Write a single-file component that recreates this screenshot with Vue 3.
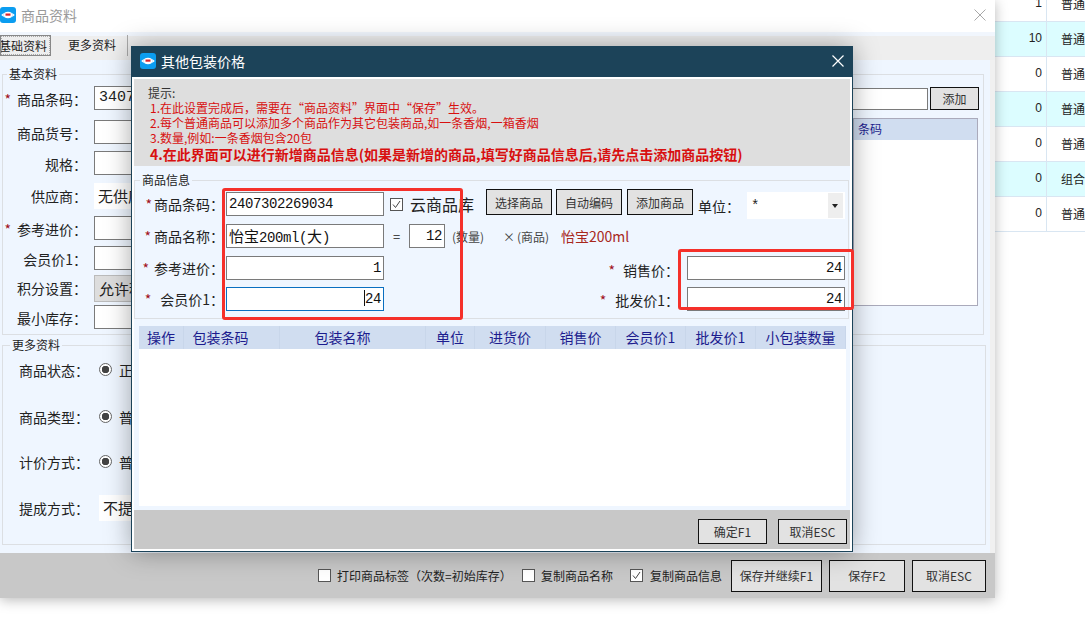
<script setup>
const tableRows = [
  { qty: '1', kind: '普通', tint: false },
  { qty: '10', kind: '普通', tint: true },
  { qty: '0', kind: '普通', tint: false },
  { qty: '0', kind: '普通', tint: true },
  { qty: '0', kind: '普通', tint: false },
  { qty: '0', kind: '组合', tint: true },
  { qty: '0', kind: '普通', tint: false },
]
const baseRows = [
  { label: '商品条码', star: true, value: '34072', kind: 'input' },
  { label: '商品货号', kind: 'input' },
  { label: '规格', kind: 'input' },
  { label: '供应商', value: '无供应商', kind: 'plain' },
  { label: '参考进价', star: true, kind: 'input' },
  { label: '会员价1', kind: 'input' },
  { label: '积分设置', value: '允许积分', kind: 'gray' },
  { label: '最小库存', kind: 'input' },
]
const moreRows = [
  { label: '商品状态', value: '正常', top: 12 },
  { label: '商品类型', value: '普通商品', top: 23 },
  { label: '计价方式', value: '普通', top: 21 },
]
const heads = [
  { t: '操作', w: 45, pad: 0 }, { t: '包装条码', w: 96, pad: 22 }, { t: '包装名称', w: 146, pad: 20 },
  { t: '单位', w: 49, pad: 0 }, { t: '进货价', w: 71, pad: 0 }, { t: '销售价', w: 70, pad: 0 },
  { t: '会员价1', w: 70, pad: 0 }, { t: '批发价1', w: 70, pad: 0 }, { t: '小包装数量', w: 90, pad: 0 },
]
</script>

<template>
  <div class="desk">
    <div class="bg-table">
      <div v-for="(r, i) in tableRows" :key="i" class="bg-row" :class="{ tint: r.tint }">
        <span class="bg-qty">{{ r.qty }}</span>
        <span class="bg-kind">{{ r.kind }}</span>
      </div>
    </div>

    <section class="win back">
      <header class="back-title">
        <svg class="logo" viewBox="0 0 16 16"><rect width="16" height="16" rx="3" fill="#0b9df0"/><ellipse cx="8" cy="8" rx="4.200" ry="3.200" fill="#fff"/><path d="M1.200 8 3.800 6v4zM14.800 8 12.200 6v4z" fill="#fff"/><rect x="5.500" y="6.500" width="5" height="2.200" fill="#d9232e"/></svg>
        <span class="back-name">商品资料</span>
        <svg class="x back-x" viewBox="0 0 12 12"><path d="M.5.500l11 11M11.500.500l-11 11" stroke="#a8a8a8" fill="none"/></svg>
      </header>
      <nav class="tabs">
        <span class="tab on">基础资料</span>
        <span class="tab">更多资料</span>
      </nav>
      <div class="back-body">
        <div class="fs base">
          <span class="legend lb">基本资料</span>
          <div class="base-grid">
            <div v-for="r in baseRows" :key="r.label" class="base-row">
              <label class="lab"><i v-if="r.star">*</i>{{ r.label }}：</label>
              <div class="box" :class="r.kind">{{ r.value }}</div>
            </div>
          </div>
          <div class="side">
            <div class="side-top">
              <div class="side-input"></div>
              <button class="btn side-btn">添加</button>
            </div>
            <div class="side-list"><div class="side-head">条码</div></div>
          </div>
        </div>
        <div class="fs more">
          <span class="legend">更多资料</span>
          <div v-for="r in moreRows" :key="r.label" class="more-row" :style="{ marginTop: r.top + 'px' }">
            <label class="lab">{{ r.label }}：</label>
            <span class="radio"></span><span class="radio-text">{{ r.value }}</span>
          </div>
          <div class="more-row last">
            <label class="lab">提成方式：</label>
            <div class="box plain comm">不提成</div>
          </div>
        </div>
      </div>
      <footer class="back-foot">
        <label class="chk-line"><span class="chk"></span>打印商品标签（次数=初始库存）</label>
        <label class="chk-line c2"><span class="chk"></span>复制商品名称</label>
        <label class="chk-line c3">
          <span class="chk"><svg viewBox="0 0 13 13"><path d="M3 6.500l2.500 3L10 3" stroke="#444" fill="none"/></svg></span>复制商品信息
        </label>
        <button class="btn fb b1">保存并继续F1</button>
        <button class="btn fb b2">保存F2</button>
        <button class="btn fb b3">取消ESC</button>
      </footer>
    </section>

    <section class="win dialog">
      <header class="dlg-title">
        <svg class="logo" viewBox="0 0 16 16"><rect width="16" height="16" rx="3" fill="#0b9df0"/><ellipse cx="8" cy="8" rx="4.200" ry="3.200" fill="#fff"/><path d="M1.200 8 3.800 6v4zM14.800 8 12.200 6v4z" fill="#fff"/><rect x="5.500" y="6.500" width="5" height="2.200" fill="#d9232e"/></svg>
        <span>其他包装价格</span>
        <svg class="x dlg-x" viewBox="0 0 12 12"><path d="M.5.500l11 11M11.500.500l-11 11" stroke="#fff" fill="none" stroke-width="1.200"/></svg>
      </header>
      <div class="dlg-inner">
        <div class="hint">
          <p class="h0">提示:</p>
          <p>1.在此设置完成后，需要在“商品资料”界面中“保存”生效。</p>
          <p>2.每个普通商品可以添加多个商品作为其它包装商品,如一条香烟,一箱香烟</p>
          <p>3.数量,例如:一条香烟包含20包</p>
          <p class="h4">4.在此界面可以进行新增商品信息(如果是新增的商品,填写好商品信息后,请先点击添加商品按钮)</p>
        </div>
        <div class="fs info">
          <span class="legend li">商品信息</span>
          <div class="info-row r1">
            <label class="lab il s1"><i>*</i>商品条码：</label>
            <div class="field w158">2407302269034</div>
            <span class="chk big"><svg viewBox="0 0 13 13"><path d="M3 6.500l2.500 3L10 3" stroke="#444" fill="none"/></svg></span>
            <span class="cloud">云商品库</span>
            <button class="btn pick">选择商品</button>
            <button class="btn pick p2">自动编码</button>
            <button class="btn pick p3">添加商品</button>
            <label class="lab unit">单位：</label>
            <div class="select"><span>*</span><b></b></div>
          </div>
          <div class="info-row r2">
            <label class="lab il s2"><i>*</i>商品名称：</label>
            <div class="field w158"><span class="cn">怡宝</span>200ml(<span class="cn">大</span>)</div>
            <span class="eq">=</span>
            <div class="field qty right">12</div>
            <span class="note n1">(数量)</span>
            <span class="note n2">×</span>
            <span class="note n3">(商品)</span>
            <span class="prod">怡宝200ml</span>
          </div>
          <div class="info-row r3">
            <label class="lab il s3"><i>*</i>参考进价：</label>
            <div class="field w158 right">1</div>
            <label class="lab rl l1"><i>*</i>销售价：</label>
            <div class="field w158 right">24</div>
          </div>
          <div class="info-row r4">
            <label class="lab il s4"><i>*</i>会员价1：</label>
            <div class="field w158 right focus"><span class="caret"></span>24</div>
            <label class="lab rl l2"><i>*</i>批发价1：</label>
            <div class="field w158 right">24</div>
          </div>
        </div>
        <div class="grid-wrap">
          <div class="grid-head">
            <span v-for="h in heads" :key="h.t" :style="{ width: h.w + 'px', paddingRight: h.pad + 'px' }">{{ h.t }}</span>
          </div>
        </div>
        <footer class="dlg-foot">
          <button class="btn ok">确定F1</button>
          <button class="btn ok">取消ESC</button>
        </footer>
      </div>
    </section>

    <div class="mark m1"></div>
    <div class="mark m2"></div>
  </div>
</template>

<style>
html, body { margin: 0; background: #fff; overflow: hidden; }
</style>

<style scoped>
.desk {
  position: relative; width: 1085px; height: 632px; overflow: hidden; background: #fff;
  font-family: "Noto Sans CJK SC", "Liberation Sans", sans-serif; color: #222; font-size: 13px;
}
p { margin: 0; }
i { font-style: normal; color: #a01020; }
button { font-family: inherit; padding: 0; }
.bg-table { margin: -13px 0 0 995px; width: 90px; }
.bg-row { display: flex; height: 34px; line-height: 33px; border-bottom: 1px solid #d9e6f2; font-size: 12px; color: #222; }
.bg-row.tint { background: #dcfdff; }
.bg-qty { width: 47px; box-sizing: border-box; text-align: right; font-family: "Liberation Sans", sans-serif; }
.bg-kind { padding-left: 14px; border-left: 1px solid #d9e6f2; margin-left: 4px; white-space: nowrap; overflow: hidden; }
.win { position: absolute; box-sizing: border-box; }
.back {
  left: 0; top: 0; width: 995px; height: 598px; background: #fff; display: flex; flex-direction: column;
  box-shadow: 0 2px 12px rgba(0,0,0,.28);
}
.back-title { height: 32px; display: flex; align-items: center; gap: 5px; color: #9a9a9a; font-size: 14px; position: relative; flex: none; box-sizing: border-box; padding-bottom: 2px; }
.back-name { margin-top: -1px; }
.logo { width: 16px; height: 16px; flex: none; }
.x { position: absolute; width: 12px; height: 12px; }
.back-x { left: 974px; top: 9px; }
.tabs { height: 28px; background: linear-gradient(#f1f6fd 0 4px, #eeeeee 4px); display: flex; align-items: flex-start; flex: none; box-sizing: border-box; padding-top: 3px; }
.tab { height: 21px; line-height: 20px; font-size: 12px; padding: 0 11px; border-right: 1px solid #aaa; color: #222; }
.tab.on { padding: 0; width: 51px; text-indent: -2px; border: 1px solid #888; box-sizing: border-box; background: #eee; overflow: hidden; margin-right: 6px; outline: 1px dotted #aaa; outline-offset: -2px; }
.back-body { flex: 1; background: #eff6ff; padding: 14px 0 4px 2px; min-height: 0; border-right: 5px solid #f0f0f0; }
.fs { position: relative; border: 1px solid #dcdfe3; box-sizing: border-box; }
.legend { position: absolute; left: 7px; top: -9px; background: #eff6ff; padding: 0 2px; font-size: 12px; line-height: 16px; color: #222; }
.lb { left: 4px; }
.base { height: 261px; width: 982px; display: flex; }
.base-grid { display: grid; grid-template-rows: 34px 31px 32px 33px 30px 29px 30px 23px; padding-top: 11px; width: 400px; }
.base-row { display: flex; align-items: flex-start; }
.lab { display: inline-block; font-size: 14px; line-height: 26px; color: #222; white-space: nowrap; }
.base-row .lab { width: 84px; text-align: right; margin-right: 7px; }
.base-row .lab i { margin-right: 6px; }
.box { box-sizing: border-box; width: 150px; height: 24px; font-size: 15px; line-height: 22px; padding-left: 4px; background: #fff; }
.box.input { border: 1px solid #7a7a7a; font-family: "Liberation Mono", monospace; font-size: 15px; }
.box.plain { height: 26px; line-height: 26px; }
.box.gray { height: 27px; line-height: 26px; background: #ddd; border: 1px solid #bbb; }
.side { margin-left: auto; padding: 13px 4px 0 0; width: 260px; box-sizing: border-box; }
.side-top { display: flex; justify-content: flex-end; gap: 2px; }
.side-input { width: 150px; height: 22px; border: 1px solid #7a7a7a; background: #fff; box-sizing: border-box; }
.side-btn { width: 49px; height: 23px; font-size: 12px; margin-top: -1px; }
.side-list { margin: 8px 1px 0 auto; height: 188px; border: 1px solid #aab; background: #fff; box-sizing: border-box; width: 125px; }
.side-head { height: 21px; line-height: 19px; background: #d0ddf0; color: #1c1c8e; font-size: 12px; padding-left: 4px; }
.more { margin-top: 10px; height: 200px; width: 984px; }
.more-row { display: flex; align-items: center; padding-left: 16px; height: 24px; }
.more-row .lab { width: 80px; }
.radio { width: 13px; height: 13px; border-radius: 50%; border: 1px solid #666; box-sizing: border-box; background: radial-gradient(#444 0 3.500px, #fff 4px); margin-top: -2px; }
.radio-text { margin-left: 7px; font-size: 14px; }
.more-row.last { margin-top: 20px; height: 27px; }
.comm { width: 120px; }
.back-foot { flex: none; height: 45px; background: #c8c8c8; box-sizing: border-box; display: flex; align-items: center; padding-left: 318px; }
.chk-line { display: flex; align-items: center; gap: 6px; white-space: nowrap; font-size: 12px; width: 204px; flex: none; }
.chk-line.c2 { width: 108px; }
.chk-line.c3 { width: 101px; gap: 7px; }
.chk { width: 13px; height: 13px; border: 1px solid #555; background: #fff; box-sizing: border-box; display: inline-block; flex: none; }
.chk svg { display: block; margin: -1px; width: 13px; height: 13px; }
.btn { background: #e2e2e2; border: 1px solid #111; color: #333; box-sizing: border-box; font-size: 12px; }
.fb { height: 32px; margin-left: 7px; flex: none; }
.b1 { width: 91px; margin-left: 0; }
.b2 { width: 76px; }
.b3 { width: 74px; }

.dialog { left: 131px; top: 46px; width: 722px; height: 506px; background: #1c4359; padding: 0 1px 1px 1px; box-shadow: 0 0 24px rgba(0,0,0,.35); display: flex; flex-direction: column; }
.dlg-title { height: 31px; color: #fff; font-size: 14px; display: flex; align-items: center; position: relative; padding: 0 0 1px 8px; gap: 5px; flex: none; box-sizing: border-box; }
.dlg-x { left: 700px; top: 9px; }
.dlg-inner { flex: 1; background: #eff6ff; border: 2px solid #fff; display: flex; flex-direction: column; min-height: 0; }
.hint { height: 87px; background: #dedede; color: #d81010; font-size: 12px; line-height: 15px; padding: 6px 0 0 13px; box-sizing: border-box; flex: none; white-space: nowrap; }
.hint p { padding-left: 3px; }
.hint .h0 { color: #333; padding-left: 0; margin-left: 1px; }
.hint .h4 { font-size: 14px; font-weight: 700; color: #d81010; line-height: 18px; }
.info { margin: 14px 0 0 0; height: 139px; width: 715px; flex: none; }
.li { left: 5px; }
.info-row { display: flex; align-items: center; position: relative; height: 24px; }
.r1 { margin-top: 11px; }
.r2 { margin-top: 8px; }
.r3 { margin-top: 8px; }
.r4 { margin-top: 7px; }
.il { width: 91px; text-align: right; box-sizing: border-box; padding-right: 2px; }
.s1 i { margin-right: 2px; }
.s2 i { margin-right: 3px; }
.s3 i { margin-right: 5px; }
.s4 i { margin-right: 9px; }
.field { box-sizing: border-box; height: 24px; border: 1px solid #7a7a7a; background: #fff; font-family: "Liberation Mono", "Noto Sans CJK SC", monospace; font-size: 14px; letter-spacing: -.4px; line-height: 22px; padding: 0 2px; color: #111; white-space: nowrap; }
.cn { font-family: "Noto Sans CJK SC", sans-serif; font-size: 15px; letter-spacing: 0; }
.w158 { width: 158px; flex: none; }
.right { text-align: right; }
.focus { border-color: #0a6fc0; position: relative; }
.caret { display: inline-block; width: 1px; height: 16px; background: #111; vertical-align: -3px; }
.big { margin-left: 6px; }
.cloud { font-size: 16px; margin-left: 7px; width: 76px; white-space: nowrap; line-height: 24px; flex: none; }
.pick { height: 26px; width: 66px; margin-top: -4px; flex: none; }
.p2 { margin-left: 4px; }
.p3 { margin-left: 5px; }
.unit { margin: 4px 0 0 5px; width: 49px; flex: none; }
.select { width: 98px; height: 27px; background: #fff; margin-top: 3px; display: flex; justify-content: space-between; font-family: "Liberation Mono", monospace; font-size: 14px; line-height: 26px; padding: 1px 2px 1px 4px; box-sizing: border-box; flex: none; }
.select b { width: 15px; background: #eee; position: relative; }
.select b::after { content: ""; position: absolute; left: 4px; top: 11px; border: 3px solid transparent; border-top: 4px solid #222; }
.eq { margin-left: 9px; width: 16px; font-size: 13px; }
.qty { width: 36px; flex: none; }
.note { font-size: 12px; color: #444; white-space: nowrap; flex: none; }
.n1 { margin-left: 7px; width: 51px; }
.n2 { width: 14px; }
.n3 { width: 44px; }
.prod { font-size: 14px; color: #a8281c; }
.rl { text-align: right; white-space: nowrap; box-sizing: border-box; padding-right: 8px; flex: none; }
.l1 { width: 303px; margin-top: 4px; }
.l2 { width: 303px; margin-top: 2px; }
.l1 i { margin-right: 8px; }
.l2 i { margin-right: 9px; }
.grid-wrap { flex: 1; margin: 7px 4px 4px 5px; background: #fff; min-height: 0; }
.grid-head { height: 23px; background: #d0ddf0; display: flex; color: #1c1c8e; font-size: 14px; line-height: 23px; }
.grid-head span { text-align: center; white-space: nowrap; box-sizing: border-box; border-right: 1px solid #c8d6ea; flex: none; }
.dlg-foot { height: 39px; flex: none; background: #c8c8c8; display: flex; justify-content: flex-end; gap: 11px; padding: 9px 3px 0 0; box-sizing: border-box; }
.ok { width: 69px; height: 25px; }

.mark { position: absolute; border: 3px solid #f5302a; border-radius: 3px; box-sizing: border-box; pointer-events: none; }
.m1 { left: 222px; top: 188px; width: 241px; height: 132px; }
.m2 { left: 678px; top: 249px; width: 176px; height: 61px; }
</style>
